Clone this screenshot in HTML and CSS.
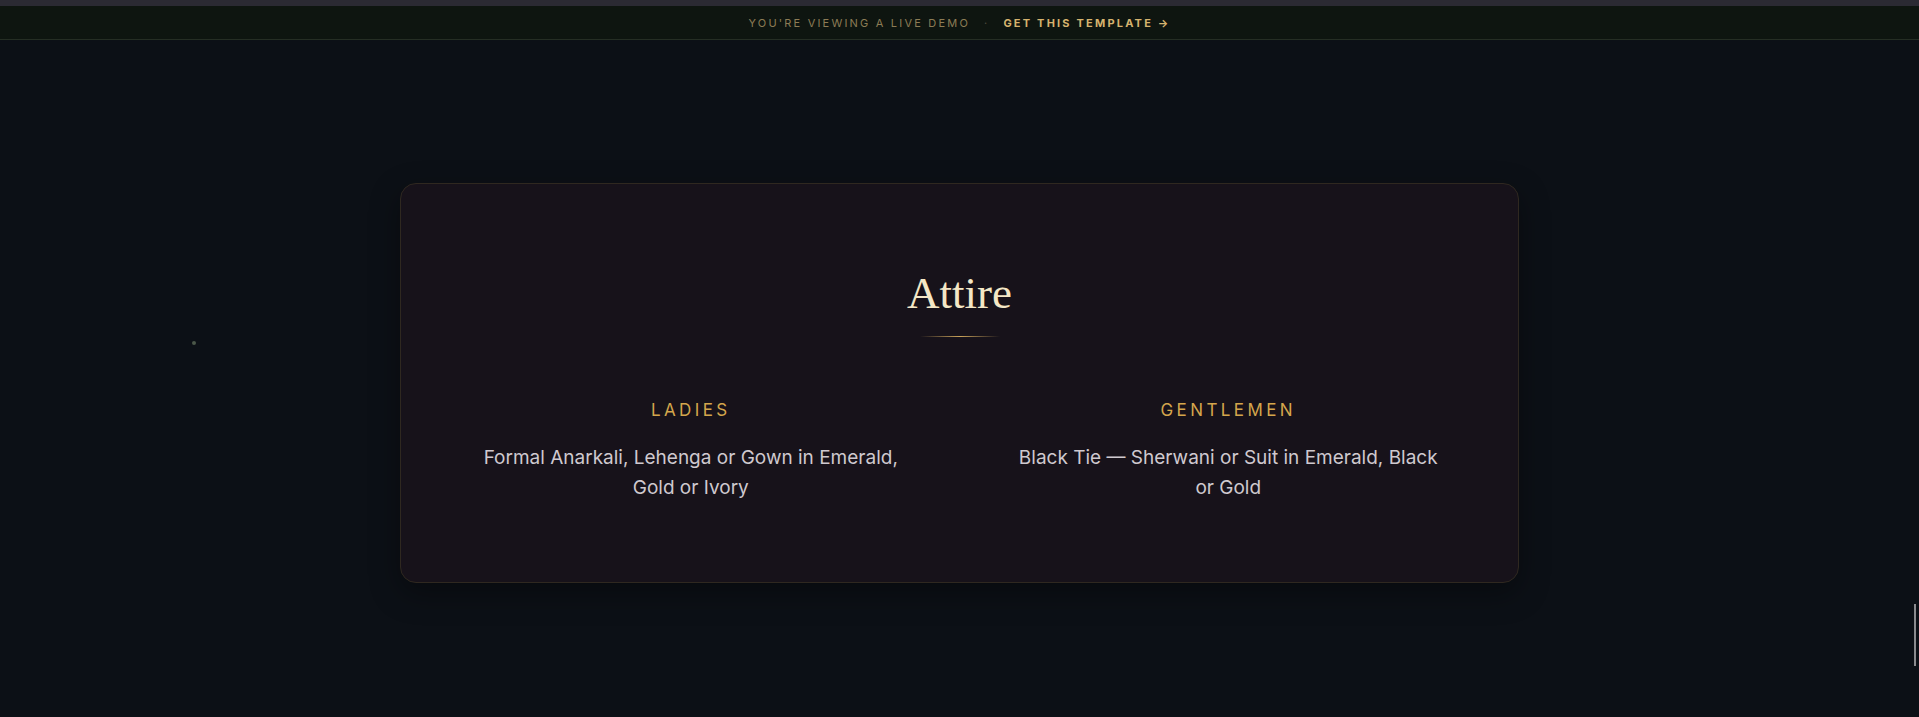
FILE: index.html
```html
<!DOCTYPE html>
<html lang="en">
<head>
    <meta charset="UTF-8">
    <meta name="viewport" content="width=device-width, initial-scale=1.0">
    <title>Attire</title>
    <link rel="stylesheet" href="styles.css">
</head>
<body>

    <div class="top-strip"></div>

    <div class="demo-bar">
        <span class="demo-note">You're viewing a live demo</span>
        <span class="demo-sep">·</span>
        <a class="demo-link" href="#">Get this template →</a>
    </div>

    <span class="sparkle"></span>

    <section class="attire">
        <div class="attire-card">
            <h2 class="attire-title">Attire</h2>
            <div class="title-rule"></div>

            <div class="attire-grid">
                <div class="attire-col">
                    <h3>Ladies</h3>
                    <p>Formal Anarkali, Lehenga or Gown in Emerald, Gold or Ivory</p>
                </div>
                <div class="attire-col">
                    <h3>Gentlemen</h3>
                    <p>Black Tie — Sherwani or Suit in Emerald, Black or Gold</p>
                </div>
            </div>
        </div>
    </section>

    <div class="scroll-track"></div>

</body>
</html>
```

FILE: styles.css
```css
body {
    margin: 0;
    background-color: #0c1016;
    font-family: 'Inter', 'Noto Sans', sans-serif;
    min-height: 100vh;
}

.top-strip {
    height: 6px;
    background-color: #2b2a33;
}

/* Demo banner */
.demo-bar {
    height: 33px;
    background-color: #0e1510;
    border-bottom: 1px solid #252e24;
    display: flex;
    align-items: center;
    justify-content: center;
    gap: 14px;
    font-size: 11px;
    letter-spacing: 0.2em;
    text-transform: uppercase;
}
.demo-note {
    color: #8c7c55;
}
.demo-sep {
    color: #4c4a3c;
}
.demo-link {
    color: #d6b36e;
    font-weight: 700;
    text-decoration: none;
}

/* Floating particle */
.sparkle {
    position: absolute;
    left: 192px;
    top: 341px;
    width: 4px;
    height: 4px;
    border-radius: 50%;
    background-color: #4b5749;
}

/* Attire section */
.attire {
    padding-top: 143px;
    padding-bottom: 100px;
}
.attire-card {
    width: 1119px;
    box-sizing: border-box;
    margin: 0 auto;
    padding: 82px 80px 79px;
    background-color: #17121a;
    border: 1px solid #2f2820;
    border-radius: 16px;
    box-shadow: 0 10px 30px rgba(0, 0, 0, 0.35);
    text-align: center;
}
.attire-title {
    margin: 0;
    font-family: 'Liberation Serif', serif;
    font-weight: 400;
    font-size: 45px;
    line-height: 1.2;
    color: #f4e7c6;
}
.title-rule {
    width: 80px;
    height: 1px;
    margin: 16px auto 0;
    background: linear-gradient(90deg, transparent, #c9a25a, transparent);
}

.attire-grid {
    display: grid;
    grid-template-columns: 1fr 1fr;
    column-gap: 118px;
    margin-top: 62px;
}
.attire-col h3 {
    margin: 0;
    font-size: 17px;
    font-weight: 400;
    line-height: 1.4;
    letter-spacing: 0.2em;
    text-transform: uppercase;
    color: #d4a64c;
}
.attire-col p {
    margin: 20px 0 0;
    font-size: 19px;
    line-height: 30px;
    color: #cfc9cf;
}

/* Scroll progress marker */
.scroll-track {
    position: fixed;
    right: 3px;
    top: 604px;
    width: 2px;
    height: 62px;
    background-color: #8a8a8e;
}
```
